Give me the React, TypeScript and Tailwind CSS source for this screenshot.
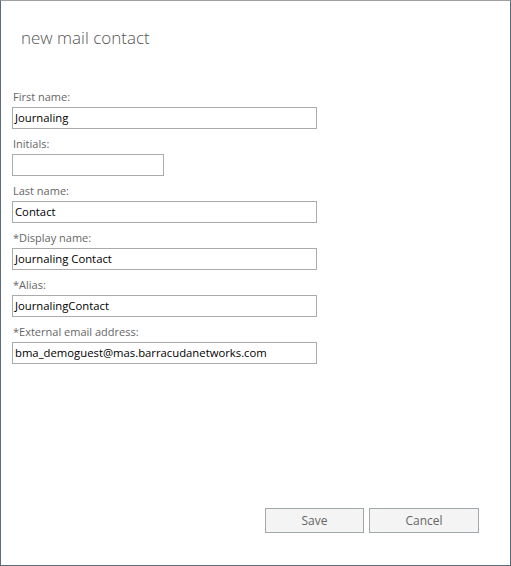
import React from "react";

const font = { fontFamily: '"Segoe UI", "Open Sans", "Noto Sans", sans-serif' };

function Field({ label, value, short }: { label: string; value: string; short?: boolean }) {
  return (
    <div className="flex flex-col">
      <div className="h-[16px] text-[11px] leading-[16px] text-[#666666] pl-[1px]">{label}</div>
      <div
        className={`mt-[2px] h-[22px] border border-[#ababab] bg-white text-[11.3px] leading-[20px] text-black pl-[2px] overflow-hidden whitespace-nowrap ${
          short ? "w-[152px]" : "w-[305px]"
        }`}
      >
        {value}
      </div>
    </div>
  );
}

export default function App() {
  return (
    <div
      className="w-[511px] h-[566px] bg-white border-t border-t-[#a0a0a0] border-l border-r border-b border-l-[#5c6b7a] border-r-[#5c6b7a] border-b-[#5c6b7a] flex flex-col"
      style={font}
    >
      <div className="pl-[20px] pt-[25px] h-[88px] text-[17px] leading-[24px] font-light text-[#555555]">
        new mail contact
      </div>
      <div className="pl-[11px] flex flex-col gap-[7px]">
        <Field label="First name:" value="Journaling" />
        <Field label="Initials:" value="" short />
        <Field label="Last name:" value="Contact" />
        <Field label="*Display name:" value="Journaling Contact" />
        <Field label="*Alias:" value="JournalingContact" />
        <Field label="*External email address:" value="bma_demoguest@mas.barracudanetworks.com" />
      </div>
      <div className="flex-1" />
      <div className="flex justify-end gap-[5px] pr-[31px] pb-[32px]">
        <button className="w-[99px] h-[25px] bg-[#f4f4f4] border border-[#a0a8ac] text-[12px] text-[#666666]">
          Save
        </button>
        <button className="w-[110px] h-[25px] bg-[#f4f4f4] border border-[#a0a8ac] text-[12px] text-[#666666]">
          Cancel
        </button>
      </div>
    </div>
  );
}
